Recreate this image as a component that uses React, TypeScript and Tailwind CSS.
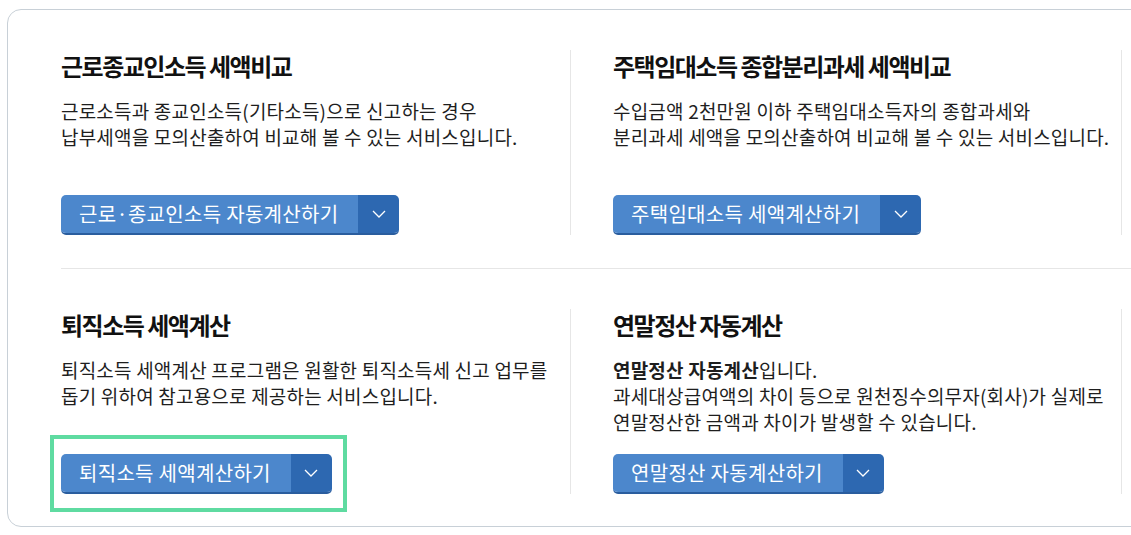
import React from "react";

type Service = {
  title: string;
  desc: React.ReactNode;
  button: string;
  highlight?: boolean;
};

const rows: Service[][] = [
  [
    {
      title: "근로종교인소득 세액비교",
      desc: (
        <>
          근로소득과 종교인소득(기타소득)으로 신고하는 경우
          <br />
          납부세액을 모의산출하여 비교해 볼 수 있는 서비스입니다.
        </>
      ),
      button: "근로·종교인소득 자동계산하기",
    },
    {
      title: "주택임대소득 종합분리과세 세액비교",
      desc: (
        <>
          수입금액 2천만원 이하 주택임대소득자의 종합과세와
          <br />
          분리과세 세액을 모의산출하여 비교해 볼 수 있는 서비스입니다.
        </>
      ),
      button: "주택임대소득 세액계산하기",
    },
  ],
  [
    {
      title: "퇴직소득 세액계산",
      desc: (
        <>
          퇴직소득 세액계산 프로그램은 원활한 퇴직소득세 신고 업무를
          <br />
          돕기 위하여 참고용으로 제공하는 서비스입니다.
        </>
      ),
      button: "퇴직소득 세액계산하기",
      highlight: true,
    },
    {
      title: "연말정산 자동계산",
      desc: (
        <>
          <b className="font-bold">연말정산 자동계산</b>입니다.
          <br />
          과세대상급여액의 차이 등으로 원천징수의무자(회사)가 실제로
          <br />
          연말정산한 금액과 차이가 발생할 수 있습니다.
        </>
      ),
      button: "연말정산 자동계산하기",
    },
  ],
];

const Chevron = () => (
  <svg width="14" height="8" viewBox="0 0 14 8" fill="none">
    <path d="M1 1l6 6 6-6" stroke="white" strokeWidth="1.3" />
  </svg>
);

const SplitButton = ({ label, highlight }: { label: string; highlight?: boolean }) => (
  <div className="relative mt-auto flex w-fit">
    <div className="flex h-[40px] overflow-hidden rounded-[5px] border-b-2 border-[#2a5d9e]">
      <span className="flex items-center bg-[#4c87cc] pl-[18px] pr-[20px] text-[20px] tracking-[0.3px] text-white">
        {label}
      </span>
      <span className="flex w-[41px] items-center justify-center bg-[#2d68b1]">
        <Chevron />
      </span>
    </div>
    {highlight && (
      <div className="pointer-events-none absolute -left-[11px] -top-[19px] h-[77px] w-[297px] border-4 border-[#5fdba1]" />
    )}
  </div>
);

const Cell = ({ s, first }: { s: Service; first: boolean }) => (
  <div
    className={`flex h-[185px] shrink-0 flex-col border-r border-[#e6e6e6] ${
      first ? "w-[510px]" : "w-[551px] pl-[42px]"
    }`}
  >
    <h3 className="text-[24px] font-bold leading-[32px] tracking-[-1.5px] text-[#111]">{s.title}</h3>
    <p className="mt-4 text-[19px] leading-[26px] tracking-[0.2px] text-[#1e1e1e]">{s.desc}</p>
    <SplitButton label={s.button} highlight={s.highlight} />
  </div>
);

export default function App() {
  return (
    <div
      className="h-[535px] w-[1131px] overflow-hidden bg-white pl-[7px] pt-[9px]"
      style={{ fontFamily: '"Noto Sans CJK KR", "Noto Sans", sans-serif' }}
    >
      <div className="w-[1500px] rounded-[14px] border border-[#c8d0d7] bg-white pl-[53px]">
        {rows.map((row, i) => (
          <div
            key={i}
            className={`flex pt-[40px] ${i === 0 ? "border-b border-[#e6e6e6] pb-[33px]" : "pb-[32px]"}`}
          >
            {row.map((s, j) => (
              <Cell key={j} s={s} first={j === 0} />
            ))}
            <div className="w-[551px] shrink-0 pl-[42px]" />
          </div>
        ))}
      </div>
    </div>
  );
}
